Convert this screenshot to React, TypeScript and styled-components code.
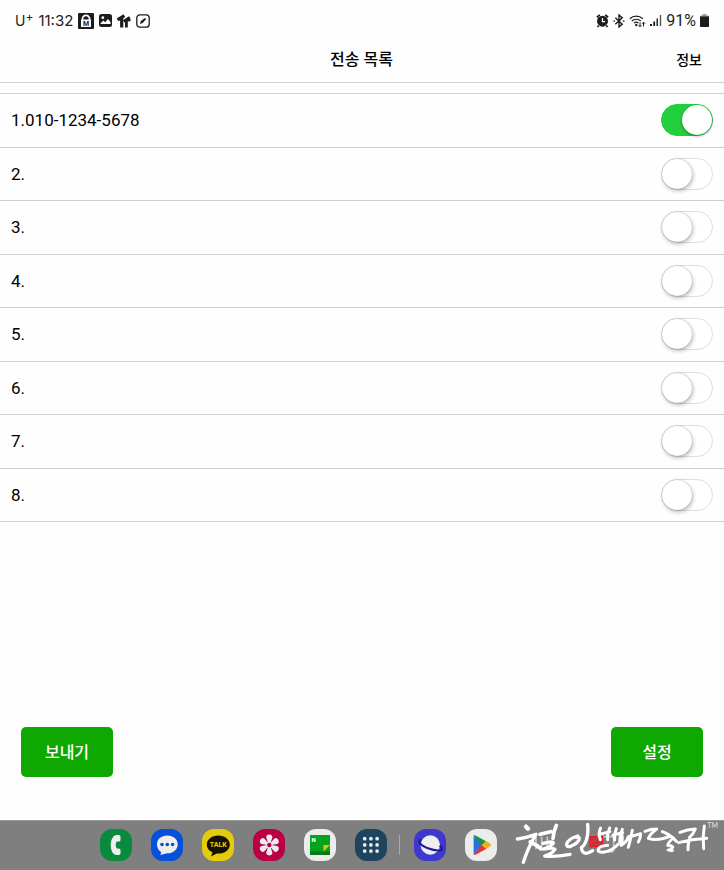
import React, { useState } from "react";
import styled, { createGlobalStyle } from "styled-components";

const GlobalStyle = createGlobalStyle`
  *, *::before, *::after { box-sizing: border-box; }
  body {
    margin: 0;
    background: #fefefe;
    color: #000;
    font-family: Roboto, "Noto Sans CJK KR", sans-serif;
  }
`;

const Screen = styled.div`
  display: flex;
  flex-direction: column;
  min-height: 100vh;
`;

const StatusBar = styled.div`
  display: flex;
  justify-content: space-between;
  align-items: center;
  height: 41px;
  padding: 0 15px;
  color: #222;
  font-size: 16px;
  line-height: 20px;
`;

const StatusGroup = styled.div<{ $gap: number }>`
  display: flex;
  align-items: center;
  gap: ${(p) => p.$gap}px;
`;

const Clock = styled.span`
  font-family: Inter, sans-serif;
  font-size: 15px;
`;

const Carrier = styled.span`
  font-family: Inter, sans-serif;
  font-size: 14px;
  sup {
    font-size: 12px;
    line-height: 0;
    vertical-align: 5px;
  }
`;

const Header = styled.header`
  display: grid;
  grid-template-columns: 1fr auto 1fr;
  align-items: center;
  height: 42px;
  padding: 0 22px 4px 21px;
  border-bottom: 1px solid #cfcfcf;
`;

const Title = styled.h1`
  grid-column: 2;
  margin: 0;
  font-size: 16px;
  line-height: 24px;
  font-weight: 500;
`;

const InfoButton = styled.button`
  justify-self: end;
  padding: 0;
  border: 0;
  background: none;
  color: #000;
  font: 500 14px/24px Roboto, "Noto Sans CJK KR", sans-serif;
`;

const List = styled.ul`
  display: grid;
  grid-auto-rows: 1fr;
  min-height: 429px;
  margin: 10px 0 0;
  padding: 0;
  list-style: none;
  border-top: 1px solid #cfcfcf;
`;

const Row = styled.li`
  display: flex;
  align-items: center;
  justify-content: space-between;
  padding: 0 11px;
  border-bottom: 1px solid #cfcfcf;
`;

const RowLabel = styled.label`
  flex: 1;
  font-size: 17px;
  line-height: 24px;
`;

const Switch = styled.input`
  appearance: none;
  flex: none;
  width: 52px;
  height: 32px;
  margin: 0;
  border: 1px solid #dedede;
  border-radius: 16px;
  background: #fff;
  &::before {
    content: "";
    display: block;
    width: 30px;
    height: 30px;
    border-radius: 50%;
    background: #fff;
    box-shadow: 0 0 1px rgba(0, 0, 0, 0.35), 1px 2px 4px rgba(0, 0, 0, 0.28);
  }
  &:checked {
    border-color: #22d03d;
    background: #22d03d;
  }
  &:checked::before {
    margin-left: 20px;
    box-shadow: 0 1px 3px rgba(0, 0, 0, 0.4);
  }
`;

const Actions = styled.div`
  display: flex;
  justify-content: space-between;
  margin-top: auto;
  padding: 24px 21px 43px;
`;

const ActionButton = styled.button`
  width: 92px;
  height: 50px;
  padding: 2px 0 0;
  border: 0;
  border-radius: 5px;
  background: #0fa800;
  color: #fff;
  font: 500 16px/24px Roboto, "Noto Sans CJK KR", sans-serif;
`;

const Dock = styled.nav`
  display: flex;
  align-items: center;
  justify-content: flex-end;
  height: 50px;
  padding-bottom: 2px;
  overflow: hidden;
  background: #7f7f7f;
  border-top: 1px solid #999;
`;

const AppGroup = styled.div`
  display: flex;
  gap: 19px;
`;

const AppButton = styled.button<{ $color: string }>`
  width: 32px;
  height: 32px;
  padding: 0;
  border: 0;
  border-radius: 12px;
  background: ${(p) => p.$color};
  svg { display: block; }
`;

const Divider = styled.span`
  width: 1px;
  height: 20px;
  margin: 0 14px 0 12px;
  background: #aaa;
`;

const BrandLogo = styled.svg`
  flex: none;
  align-self: flex-start;
  margin-left: 8px;
`;

const LockIcon = () => (
  <svg width="16" height="16" viewBox="0 0 16 16">
    <rect width="16" height="16" rx="1" fill="#1c1c1c" />
    <path d="M4.500 7V5.800a3.500 3.500 0 0 1 7 0V7" fill="none" stroke="#fff" strokeWidth="1.800" />
    <rect x="3" y="6.500" width="10" height="7.500" fill="#fff" />
    <text x="8" y="13" textAnchor="middle" fontFamily="Roboto" fontWeight="700" fontSize="7" fill="#1c1c1c">M</text>
  </svg>
);

const PhotoIcon = () => (
  <svg width="13" height="13" viewBox="0 0 13 13">
    <rect width="13" height="13" rx="2.5" fill="#1c1c1c" />
    <circle cx="3.8" cy="3.7" r="1.4" fill="#fff" />
    <path d="M1.5 9.5 4.2 6.6 6.2 8.3 9 5 11.6 8.3v1.6H1.5z" fill="#fff" />
  </svg>
);

const TossIcon = () => (
  <svg width="14" height="14" viewBox="0 0 14 14" fill="none" stroke="#1c1c1c">
    <path d="M.5 5.8 7.4 1.7M4.7 4v9.5" strokeWidth="3.2" />
    <path d="m6.6 7.4 6.2-4M9.4 6v7.5" strokeWidth="2.8" />
    <path d="m9.8 6.7 3.7-.8" strokeWidth="2.3" />
  </svg>
);

const EditIcon = () => (
  <svg width="14" height="14" viewBox="0 0 14 14">
    <rect x=".8" y=".8" width="12.4" height="12.4" rx="3" fill="none" stroke="#1c1c1c" strokeWidth="1.3" />
    <path d="m4 10 .8-3L9 3.9l1.2 1.2L6.7 9z" fill="#1c1c1c" />
  </svg>
);

const AlarmIcon = () => (
  <svg width="13" height="14" viewBox="0 0 12 13">
    <circle cx="6" cy="6.7" r="5.1" fill="#1c1c1c" />
    <path d="M.8 3 3.500.8M11.2 3 8.500.8M2.500 10.8 1.3 12M9.500 10.8l1.2 1.2" stroke="#1c1c1c" strokeWidth="1.7" />
    <path d="M6 3.8V7h2.4" fill="none" stroke="#fff" strokeWidth="1.2" />
  </svg>
);

const BluetoothIcon = () => (
  <svg width="12" height="14" viewBox="0 0 11 13" fill="none" stroke="#1c1c1c" strokeWidth="1.3">
    <path d="m2.1 3.4 6.4 6L5.5 12V1l3 2.6-6.4 6" />
    <circle cx="1.1" cy="6.5" r=".8" fill="#1c1c1c" stroke="none" />
    <circle cx="9.900" cy="6.500" r=".8" fill="#1c1c1c" stroke="none" />
  </svg>
);

const WifiIcon = () => (
  <svg width="17" height="14" viewBox="0 0 17 14" fill="none" stroke="#1c1c1c" strokeWidth="1.2">
    <path d="M.8 4.7a9.5 9.5 0 0 1 13 0M2.8 7a6.6 6.6 0 0 1 9 0M4.9 9.1a3.7 3.7 0 0 1 4.5-.2" />
    <circle cx="7.3" cy="11" r="1.2" fill="#1c1c1c" stroke="none" />
    <path d="M11 8.5v4.2M9.7 11.3l1.3 1.5 1.3-1.5M14.5 12.5V8.2M13 9.7l1.5-1.5L16 9.7" strokeWidth="1" />
  </svg>
);

const SignalIcon = () => (
  <svg width="12" height="13" viewBox="0 0 12 13" fill="#1c1c1c">
    <path d="M0 10h2v2H0zM3.3 7.5h1.8V12H3.3zM6.5 4.5h1.4V12H6.5z" />
    <path d="M9.8 1h1.4v11H9.8z" fill="#555" />
  </svg>
);

const BatteryIcon = () => (
  <svg width="9" height="13" viewBox="0 0 9 13">
    <path d="M2.5 0h4v1.5H8q1 0 1 1V12q0 1-1 1H1q-1 0-1-1V2.5q0-1 1-1h1.5z" fill="#999" />
    <path d="M0 2.5h9V12q0 1-1 1H1q-1 0-1-1z" fill="#1c1c1c" />
  </svg>
);

const PhoneGlyph = () => (
  <svg width="32" height="32" viewBox="0 0 32 32">
    <path d="M17 6h1.800q1.700 0 1.700 1.700v3.200q0 1.600-1.600 1.600h-2.200c-1.300 2-1.300 5 0 7h2.200q1.600 0 1.600 1.600v3.200q0 1.700-1.700 1.700H17C8.700 26 8.700 6 17 6z" fill="#eee" />
  </svg>
);

const MessageGlyph = () => (
  <svg width="32" height="32" viewBox="0 0 32 32">
    <path d="M16.3 6.5c6 0 10.400 3.800 10.400 8.900s-4.400 8.800-10.400 8.800l-7 1.700 1-2.700C7.600 21.400 6 18.700 6 15.400c0-5.100 4.300-8.900 10.300-8.900z" fill="#eee" />
    <g fill="#064fd0"><circle cx="11" cy="15.5" r="1.8" /><circle cx="16.3" cy="15.5" r="1.8" /><circle cx="21.6" cy="15.5" r="1.8" /></g>
  </svg>
);

const TalkGlyph = () => (
  <svg width="32" height="32" viewBox="0 0 32 32">
    <path d="M16.3 6.5c6.500 0 11.500 4 11.500 9.200S22.800 24.500 16.300 24.500h-1.500L9 27.500l1.500-4.200C7 21.800 4.800 19 4.800 15.700c0-5.200 5-9.200 11.500-9.200z" fill="#171100" />
    <text x="16.3" y="18.3" textAnchor="middle" fontFamily="Roboto" fontWeight="700" fontSize="7" fill="#ead20b">TALK</text>
  </svg>
);

const FlowerGlyph = () => (
  <svg width="32" height="32" viewBox="0 0 32 32">
    <g fill="#eee">
      {[0, 60, 120, 180, 240, 300].map((angle) => (
        <path key={angle} transform={`rotate(${angle} 16.300 16)`} d="M15.300 14.500 13.300 8.700q-.4-2.900 3-3.100 3.400.2 3 3.100l-2 5.800z" />
      ))}
    </g>
    <circle cx="16.3" cy="16" r="3.1" fill="#eee" />
    <circle cx="16.3" cy="16" r="2.2" fill="#b8003f" />
  </svg>
);

const MemoGlyph = () => (
  <svg width="32" height="32" viewBox="0 0 32 32">
    <rect x="6" y="6" width="20" height="20" fill="#00a51b" />
    <path d="M6 22h14l-2 4H6z" fill="#087a1d" />
    <path d="M19 26v-3.500h7V26z" fill="#047b15" />
    <path d="M19.5 16H26l-6.500 6.500z" fill="#f0b91b" />
    <text x="7.5" y="12.6" fontFamily="Roboto" fontWeight="900" fontSize="6" fill="#fff">N</text>
  </svg>
);

const GridGlyph = () => (
  <svg width="32" height="32" viewBox="0 0 32 32" fill="#e8eef1">
    {[9.7, 15.9, 22.1].map((y) => [9.7, 15.9, 22.1].map((x) => (
      <circle key={`${x}-${y}`} cx={x} cy={y} r="1.85" />
    )))}
  </svg>
);

const PlanetGlyph = () => (
  <svg width="32" height="32" viewBox="0 0 32 32" fill="none">
    <circle cx="16.3" cy="16" r="9.7" fill="#eee" />
    <path d="M7.2 10.5C3 12 6 16.3 14 19.2c7.500 2.700 14 3.300 14 .5 0-1.200-.9-2-2.300-3" stroke="#211a9b" strokeWidth="2.2" />
  </svg>
);

const PlayGlyph = () => (
  <svg width="32" height="32" viewBox="0 0 32 32">
    <path d="M8.6 6.5v19L17 16z" fill="#2472dd" />
    <path d="M8.6 6.5q1-.6 2 0l10.800 6L16.8 17z" fill="#159347" />
    <path d="M8.6 25.5 17 15.5l4.500 4.300-10.900 6q-1.200.5-2-.3z" fill="#db3536" />
    <path d="m21 12 4.500 2.800q1.300 1.200 0 2.400L21 20l-4.500-4z" fill="#edb020" />
  </svg>
);

const CalligraphyLogo = () => (
  <BrandLogo width="219" height="49" viewBox="0 17 657 147" role="img" aria-label="철인뼈다귀">
    <g fill="none" stroke="#c9c9c9" strokeWidth="5">
      <path d="M93 64v38M110 64v38M127 64v38" />
      <path d="M292 70q0-6 6-6h20q8 0 8 8v30q0 8-8 8h-24M507 67l-19 20 19 20" />
    </g>
    <g>
      <rect x="253" y="62" width="42" height="34" fill="#f01821" />
      <path d="M258 70h12v8h-12v10h13M275 67v23M281 69h9v7h-9v12h9" fill="none" stroke="#a95556" strokeWidth="3" />
    </g>
    <g fill="none" stroke="#fff" strokeLinecap="round" strokeLinejoin="round">
      <path d="m63 34 6 6" strokeWidth="13" />
      <path d="M37 71q28-4 56-14-22 35-38 84" strokeWidth="10" />
      <path d="M76 80q19 9 32 20" strokeWidth="12" />
      <path d="M105 57l32-8M154 30q-8 16-10 39" strokeWidth="11" />
      <path d="M114 84q33-8 31-1-8 12-29 18 30-5 34 1-9 13-31 20 30 4 76-5" strokeWidth="10" />
      <path d="M218 62q-28 8-33 24-2 11 12 7 25-11 26-23 0-8-10-4" strokeWidth="10" />
      <path d="M248 27q3 30-5 50-7 17-14 19 2 17 14 18 8 0 20-8" strokeWidth="10" />
      <path d="M287 38q-9 17-1 35M314 38q-8 20-6 35M283 57l32-8M334 40q-7 16-5 34M352 42q-8 18-8 37M324 59l29-7" strokeWidth="9" />
      <path d="M308 90c-36 3-37 24-10 20 17-2 31-12 42-24" strokeWidth="9" />
      <path d="M348 52q8 15 0 38 16-9 24-27M382 45q-5 27-12 51M368 67l39-12q0 13-7 25" strokeWidth="9" />
      <path d="M420 48q18-7 35-7-19 14-25 28 26 9 64-6M472 49q25 9 42 29" strokeWidth="9" />
      <path d="M505 67q-17 15-17 24 10-3 16 4-3 7-15 9 7 2 12 3" strokeWidth="8" />
      <path d="M525 51q22-9 46-10-7 17-18 26M521 82q40-10 84-13M552 76q-3 12-3 27M598 32q-6 34-2 68" strokeWidth="9" />
    </g>
    <text x="607" y="39" fill="#e3e3e3" fontFamily="Lato, sans-serif" fontSize="21">TM</text>
  </BrandLogo>
);

const apps = [
  { name: "전화", color: "#088b3c", icon: <PhoneGlyph /> },
  { name: "메시지", color: "#0651dc", icon: <MessageGlyph /> },
  { name: "카카오톡", color: "#e3cc0b", icon: <TalkGlyph /> },
  { name: "갤러리", color: "#ba0042", icon: <FlowerGlyph /> },
  { name: "네이버 메모", color: "#ececec", icon: <MemoGlyph /> },
  { name: "모든 앱", color: "#1e455d", icon: <GridGlyph /> },
];

const recentApps = [
  { name: "인터넷", color: "#3f38cf", icon: <PlanetGlyph /> },
  { name: "Play 스토어", color: "#ececec", icon: <PlayGlyph /> },
];

const initialRecipients = [
  { id: 1, phone: "010-1234-5678", enabled: true },
  ...[2, 3, 4, 5, 6, 7, 8].map((id) => ({ id, phone: "", enabled: false })),
];

export default function App() {
  const [recipients, setRecipients] = useState(initialRecipients);
  const toggle = (id: number) =>
    setRecipients((items) => items.map((r) => (r.id === id ? { ...r, enabled: !r.enabled } : r)));

  return (
    <Screen>
      <GlobalStyle />
      <StatusBar>
        <StatusGroup $gap={5}>
          <Carrier>U<sup>+</sup></Carrier>
          <Clock>11:32</Clock>
          <LockIcon />
          <PhotoIcon />
          <TossIcon />
          <EditIcon />
        </StatusGroup>
        <StatusGroup $gap={4}>
          <AlarmIcon />
          <BluetoothIcon />
          <WifiIcon />
          <SignalIcon />
          <span>91%</span>
          <BatteryIcon />
        </StatusGroup>
      </StatusBar>
      <Header>
        <Title>전송 목록</Title>
        <InfoButton type="button">정보</InfoButton>
      </Header>
      <List>
        {recipients.map((r) => (
          <Row key={r.id}>
            <RowLabel htmlFor={`recipient-${r.id}`}>{r.id}.{r.phone}</RowLabel>
            <Switch
              id={`recipient-${r.id}`}
              type="checkbox"
              role="switch"
              checked={r.enabled}
              onChange={() => toggle(r.id)}
            />
          </Row>
        ))}
      </List>
      <Actions>
        <ActionButton type="button">보내기</ActionButton>
        <ActionButton type="button">설정</ActionButton>
      </Actions>
      <Dock>
        <AppGroup>
          {apps.map((app) => (
            <AppButton key={app.name} type="button" aria-label={app.name} $color={app.color}>{app.icon}</AppButton>
          ))}
        </AppGroup>
        <Divider />
        <AppGroup>
          {recentApps.map((app) => (
            <AppButton key={app.name} type="button" aria-label={app.name} $color={app.color}>{app.icon}</AppButton>
          ))}
        </AppGroup>
        <CalligraphyLogo />
      </Dock>
    </Screen>
  );
}
